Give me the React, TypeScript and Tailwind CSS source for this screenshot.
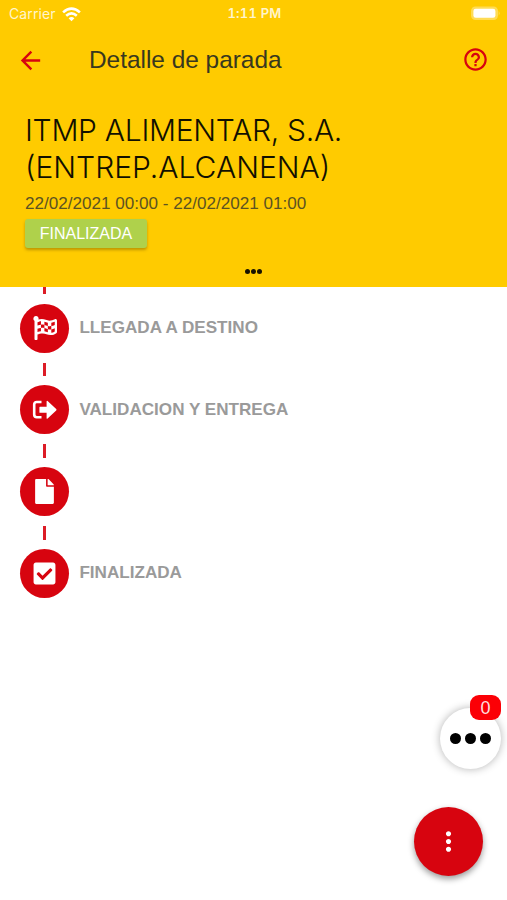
import React from 'react';
import { FaFlagCheckered, FaCheckSquare, FaFile } from 'react-icons/fa';
import { MdArrowBack, MdHelpOutline, MdMoreVert } from 'react-icons/md';

function ExitIcon() {
  return (
    <svg width="26" height="20" viewBox="0 0 26 20" fill="none">
      <path d="M9.5 2H4.8Q2.2 2 2.2 4.6V14.6Q2.2 17.2 4.8 17.2H9.5" stroke="white" strokeWidth="2.6" />
      <path d="M8 6.8H14.6V1.3Q14.8 .4 15.6 1L24.2 9.1Q24.9 9.8 24.2 10.5L15.6 18.6Q14.8 19.2 14.6 18.3V12.8H8Q7.4 12.8 7.4 12.2V7.4Q7.4 6.8 8 6.8Z" fill="white" />
    </svg>
  );
}

function Dots({ className }: { className: string }) {
  return (
    <>
      <span className={className} />
      <span className={className} />
      <span className={className} />
    </>
  );
}

function Step({ icon, label, last }: { icon: React.ReactNode; label: string; last: boolean }) {
  return (
    <li className="flex h-[81.8px] items-start">
      <div className="flex w-[49px] flex-col items-center">
        <div className="flex size-[49px] shrink-0 items-center justify-center rounded-full bg-[#d7040f] text-white">{icon}</div>
        {!last && <div className="mt-[10px] h-[13.6px] w-[3px] bg-[#dc1c26]" />}
      </div>
      <span className="ml-[10px] flex h-[48px] items-center text-[17.1px] font-bold whitespace-nowrap text-[#9a9a9a]">{label}</span>
    </li>
  );
}

const steps = [
  { label: 'LLEGADA A DESTINO', icon: <FaFlagCheckered size={24} /> },
  { label: 'VALIDACION Y ENTREGA', icon: <ExitIcon /> },
  { label: '', icon: <FaFile size={25} /> },
  { label: 'FINALIZADA', icon: <FaCheckSquare size={25} /> },
];

export default function App() {
  return (
    <div className="relative h-[900px] w-[507px] overflow-hidden bg-white font-['Liberation_Sans',Arial,sans-serif]">
      <header className="h-[287px] bg-[#ffcb00]">
        <div className="flex h-[28px] items-center justify-between pr-[7px] pl-[9px] text-white">
          <div className="flex flex-1 items-center gap-[6px]">
            <span className="-mt-[2px] font-['Inter',sans-serif] text-[14px] tracking-[0.1px] text-[#fff5cc]">Carrier</span>
            <svg width="19" height="15" viewBox="0 0 19 15" fill="none" stroke="white" strokeWidth="2.6">
              <path d="M1.1 5.4Q9.5 -2.2 17.9 5.4" />
              <path d="M4.2 8.7Q9.5 4 14.8 8.7" />
              <path d="M9.5 14.2L6.6 11.2Q9.5 8.9 12.4 11.2Z" fill="white" stroke="none" />
            </svg>
          </div>
          <span className="-mt-[1px] font-['Inter',sans-serif] text-[13px] font-semibold tracking-[0.2px] text-[#fff5cc] tabular-nums">1:11 PM</span>
          <div className="flex flex-1 justify-end">
            <svg width="30" height="15" viewBox="0 0 30 15" className="-mt-[1px]">
              <rect x="1" y="0.5" width="27" height="13.5" rx="4.5" fill="#ffdc55" />
              <rect x="3.4" y="2.8" width="22" height="9" rx="2.3" fill="white" />
              <path d="M28.7 5Q30.5 7.2 28.7 9.5Z" fill="#ffdc55" />
            </svg>
          </div>
        </div>
        <div className="flex h-[64px] items-center pr-[18px] pl-[16px] text-[#d7040f]">
          <MdArrowBack size={29} />
          <h1 className="ml-[44px] flex-1 text-[24.4px] text-[#38381f]">Detalle de parada</h1>
          <MdHelpOutline size={27} className="-mt-[2px]" />
        </div>
        <div className="pt-[20px] pl-[25px]">
          <h2 className="font-['Inter',sans-serif] text-[30px] leading-[37px] font-light whitespace-nowrap text-[#111000]">
            <span className="block tracking-[-0.28px]">ITMP ALIMENTAR, S.A.</span>
            <span className="block">(ENTREP.ALCANENA)</span>
          </h2>
          <p className="mt-[7px] text-[17.1px] leading-[22px] text-[#5c5322]">22/02/2021 00:00 - 22/02/2021 01:00</p>
          <div className="mt-[4px] flex h-[29px] w-[122px] items-center justify-center rounded-[3px] bg-[#afd14b] text-[16px] text-white shadow-[0_2px_3px_rgba(90,70,0,0.4)]">FINALIZADA</div>
        </div>
        <div className="mt-[21px] flex justify-center gap-[1.4px]">
          <Dots className="size-[4.8px] rounded-full bg-[#171200]" />
        </div>
      </header>
      <div className="pl-[20.4px]">
        <div className="mb-[10px] ml-[23px] h-[6.6px] w-[3px] bg-[#dc1c26]" />
        <ul>
          {steps.map((s, i) => (
            <Step key={i} {...s} last={i === steps.length - 1} />
          ))}
        </ul>
      </div>
      <div className="absolute top-[708px] left-[440px] flex size-[61px] items-center justify-center gap-[4px] rounded-full bg-white shadow-[0_0_8px_rgba(0,0,0,0.3)]">
        <Dots className="size-[11px] rounded-full bg-black" />
        <span className="absolute -top-[13px] left-[30px] flex h-[25px] w-[31px] items-center justify-center rounded-[9px] bg-[#fb0006] pt-px text-[18px] text-[#ffdede]">0</span>
      </div>
      <button className="absolute top-[807px] left-[413.5px] flex size-[69px] items-center justify-center rounded-full bg-[#d7040f] text-white shadow-[0_3px_6px_rgba(0,0,0,0.4)]">
        <MdMoreVert size={31} />
      </button>
    </div>
  );
}
